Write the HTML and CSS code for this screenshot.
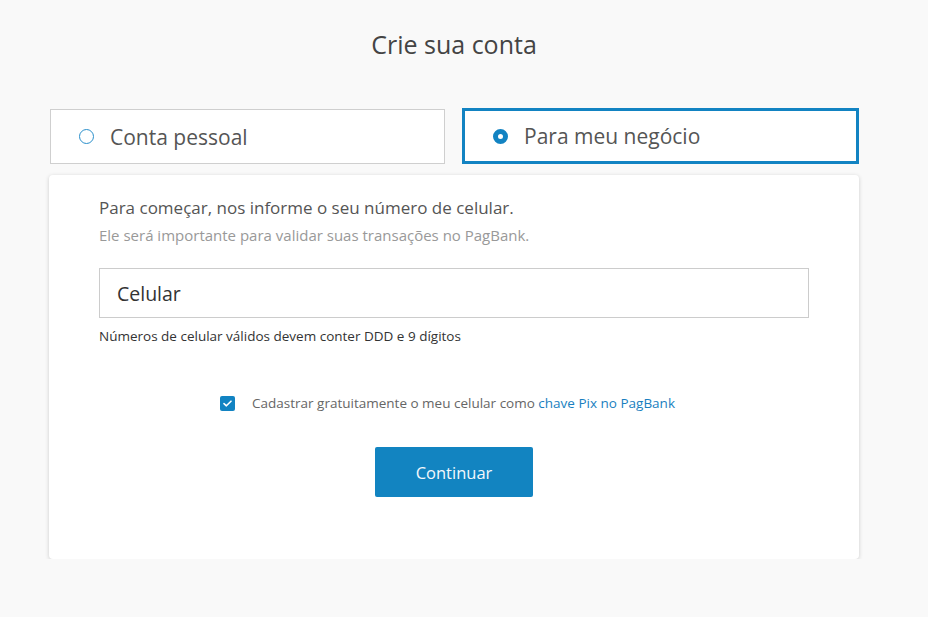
FILE: index.html
```html
<!DOCTYPE html>
<html lang="pt-BR">
<head>
<meta charset="utf-8">
<title>Crie sua conta</title>
<link rel="stylesheet" href="styles.css">
</head>
<body>
<div class="page">
  <h1 class="title">Crie sua conta</h1>
  <div class="tabs">
    <label class="tab tab-off">
      <span class="radio"></span>
      <span class="tab-label">Conta pessoal</span>
    </label>
    <label class="tab tab-on">
      <span class="radio radio-on"></span>
      <span class="tab-label">Para meu negócio</span>
    </label>
  </div>
  <div class="card">
    <p class="lead">Para começar, nos informe o seu número de celular.</p>
    <p class="sub">Ele será importante para validar suas transações no PagBank.</p>
    <div class="field">Celular</div>
    <p class="help">Números de celular válidos devem conter DDD e 9 dígitos</p>
    <div class="check-row">
      <span class="checkbox">
        <svg width="9" height="7" viewBox="0 0 9 7"><path d="M1 3.6 L3.4 5.8 L8 1.2" fill="none" stroke="#fff" stroke-width="1.6" stroke-linecap="round" stroke-linejoin="round"/></svg>
      </span>
      <span class="check-text">Cadastrar gratuitamente o meu celular como <a class="link">chave Pix no PagBank</a></span>
    </div>
    <div class="actions">
      <button class="btn">Continuar</button>
    </div>
  </div>
</div>
</body>
</html>
```
FILE: styles.css
```css
html, body {
  margin: 0;
  padding: 0;
  background: #f9f9f9;
}
body {
  font-family: "Open Sans", "Liberation Sans", sans-serif;
  color: #444;
}
.page {
  width: 810px;
  margin-left: 49px;
  padding-top: 28px;
}
.title {
  margin: 0;
  text-align: center;
  font-size: 25px;
  font-weight: 400;
  line-height: 32px;
  color: #444;
}
.tabs {
  display: flex;
  justify-content: space-between;
  margin-top: 48px;
}
.tab {
  box-sizing: border-box;
  display: flex;
  align-items: center;
  background: #fff;
}
.tab-off {
  width: 395px;
  height: 55px;
  margin-left: 1px;
  margin-top: 1px;
  border: 1px solid #cfcfcf;
  padding-left: 28px;
}
.tab-on {
  width: 397px;
  height: 56px;
  border: 3px solid #1283c2;
  padding-left: 28px;
}
.radio {
  box-sizing: border-box;
  width: 15px;
  height: 15px;
  border-radius: 50%;
  border: 1.5px solid #2a8fcb;
  background: #fff;
  flex: none;
}
.radio-on {
  border: 5px solid #1283c2;
}
.tab-label {
  font-size: 21px;
  color: #555;
  margin-left: 16px;
}
.tab-on .tab-label {
  margin-left: 16px;
}
.card {
  margin-top: 11px;
  background: #fff;
  border-radius: 4px;
  box-shadow: 0 1px 4px rgba(0,0,0,0.18);
  height: 384px;
  box-sizing: border-box;
  padding: 22px 50px 0 50px;
}
.lead {
  margin: 0;
  font-size: 17px;
  line-height: 22px;
  color: #555;
}
.sub {
  margin: 6px 0 0 0;
  font-size: 15px;
  line-height: 20px;
  color: #999;
}
.field {
  box-sizing: border-box;
  margin-top: 23px;
  width: 710px;
  height: 50px;
  border: 1px solid #ccc;
  display: flex;
  align-items: center;
  padding-left: 17px;
  font-size: 19.5px;
  color: #333;
}
.help {
  margin: 9px 0 0 0;
  font-size: 13.5px;
  line-height: 18px;
  color: #333;
}
.check-row {
  display: flex;
  align-items: center;
  justify-content: center;
  margin-top: 49px;
  padding-right: 13px;
}
.checkbox {
  width: 15px;
  height: 15px;
  border-radius: 2px;
  background: #1283c2;
  display: flex;
  align-items: center;
  justify-content: center;
  flex: none;
}
.check-text {
  margin-left: 17px;
  font-size: 13.5px;
  color: #666;
}
.link {
  color: #1a7fc0;
}
.actions {
  display: flex;
  justify-content: center;
  margin-top: 35px;
}
.btn {
  width: 158px;
  height: 50px;
  border: none;
  border-radius: 2px;
  background: #1284c1;
  color: #f2f8fc;
  font-family: "Open Sans", "Liberation Sans", sans-serif;
  font-size: 16.5px;
}
```
